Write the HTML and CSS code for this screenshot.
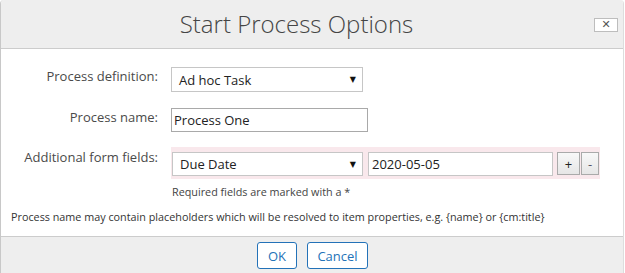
FILE: index.html
```html
<!DOCTYPE html>
<html>
<head>
<meta charset="utf-8">
<link rel="stylesheet" href="styles.css">
</head>
<body>
<div class="dialog">
  <div class="hd">
    <div class="title">Start Process Options</div>
    <button class="close">✕</button>
  </div>
  <div class="bd">
    <div class="form">
      <div class="lbl">Process definition:</div>
      <div class="ctl">
        <div class="select def"><span>Ad hoc Task</span><span class="arr">▼</span></div>
      </div>
      <div class="lbl">Process name:</div>
      <div class="ctl">
        <div class="input name">Process One</div>
      </div>
      <div class="lbl lbl3">Additional form fields:</div>
      <div class="ctl">
        <div class="strip">
          <div class="select field"><span>Due Date</span><span class="arr">▼</span></div>
          <div class="input date">2020-05-05</div>
          <button class="sbtn plus">+</button>
          <button class="sbtn minus">-</button>
        </div>
        <div class="req">Required fields are marked with a *</div>
      </div>
    </div>
    <div class="note">Process name may contain placeholders which will be resolved to item properties, e.g. {name} or {cm:title}</div>
  </div>
  <div class="ft">
    <button class="btn ok">OK</button>
    <button class="btn cancel">Cancel</button>
  </div>
</div>
</body>
</html>
```
FILE: styles.css
```css
html, body {
  margin: 0;
  padding: 0;
  background: #fff;
}
body {
  font-family: "Open Sans", "DejaVu Sans", sans-serif;
  color: #333;
}
.dialog {
  width: 624px;
  height: 273px;
  border-left: 1px solid #c8c8c8;
  border-right: 1px solid #dddddd;
  border-top-left-radius: 4px;
  border-top-right-radius: 4px;
  box-sizing: border-box;
  display: flex;
  flex-direction: column;
  overflow: hidden;
}
.hd {
  height: 49px;
  box-sizing: border-box;
  background: #eeeeee;
  border-bottom: 1px solid #cccccc;
  display: flex;
  align-items: flex-start;
}
.title {
  flex: 1;
  text-align: center;
  font-size: 24px;
  font-weight: 300;
  line-height: 48px;
  color: #454545;
  padding-left: 2px;
}
.close {
  margin: 18px 5px 0 4px;
  width: 24px;
  height: 14px;
  padding: 0;
  border: 1px solid #bdbdbd;
  background: #fff;
  color: #555;
  font-size: 11px;
  font-weight: bold;
  line-height: 12px;
  font-family: "DejaVu Sans", sans-serif;
}
.bd {
  flex: 1;
  background: #fff;
  padding-top: 18px;
}
.form {
  display: grid;
  grid-template-columns: 157px auto;
  column-gap: 13px;
  row-gap: 15px;
  align-items: start;
}
.lbl {
  text-align: right;
  font-size: 13px;
  line-height: 18px;
  color: #4a4a4a;
}
.lbl3 {
  padding-top: 1px;
}
.ctl {
  display: flex;
  flex-direction: column;
  align-items: flex-start;
}
.select {
  box-sizing: border-box;
  border: 1px solid #c6c6c6;
  background: #fff;
  display: flex;
  align-items: center;
  justify-content: space-between;
  font-size: 13px;
  color: #222;
  padding-left: 7px;
  padding-right: 6px;
}
.arr {
  font-size: 8px;
  color: #111;
  font-family: "DejaVu Sans", sans-serif;
}
.def {
  width: 192px;
  height: 25px;
  margin-bottom: 1px;
}
.input {
  box-sizing: border-box;
  border: 1px solid #a9a9a9;
  background: #fff;
  font-size: 13px;
  color: #222;
  display: flex;
  align-items: center;
}
.name {
  width: 197px;
  height: 24px;
  padding-left: 2px;
}
.strip {
  width: 429px;
  height: 32px;
  box-sizing: border-box;
  background: #f9e8ec;
  padding: 5px 1px 3px 1px;
  display: flex;
  align-items: flex-start;
}
.field {
  width: 191px;
  height: 24px;
  margin-right: 5px;
}
.date {
  width: 185px;
  height: 24px;
  padding-left: 3px;
  border-color: #c6c6c6;
  margin-right: 4px;
}
.sbtn {
  height: 23px;
  box-sizing: border-box;
  border: 1px solid #aaaaaa;
  background: linear-gradient(#f8f8f8, #e6e6e6);
  font-family: "Open Sans", sans-serif;
  font-size: 13px;
  padding: 0;
  line-height: 20px;
}
.plus {
  width: 23px;
  margin-right: 1px;
  color: #222;
}
.minus {
  width: 18px;
  color: #556;
}
.req {
  margin-top: 5px;
  font-size: 10.8px;
  line-height: 15px;
  color: #444;
  padding-left: 1px;
}
.note {
  margin-top: 10px;
  padding-left: 10px;
  font-size: 10.8px;
  line-height: 15px;
  color: #333;
}
.ft {
  height: 37px;
  box-sizing: border-box;
  background: #eeeeee;
  border-top: 1px solid #cccccc;
  display: flex;
  justify-content: center;
  align-items: flex-start;
  gap: 10px;
  padding-top: 5px;
  padding-left: 1px;
}
.btn {
  height: 27px;
  box-sizing: border-box;
  border: 1px solid #2372b8;
  border-radius: 3px;
  background: #fff;
  color: #2372b8;
  font-family: "Open Sans", sans-serif;
  font-size: 13px;
  padding: 0;
}
.ok {
  width: 40px;
}
.cancel {
  width: 61px;
}
```
